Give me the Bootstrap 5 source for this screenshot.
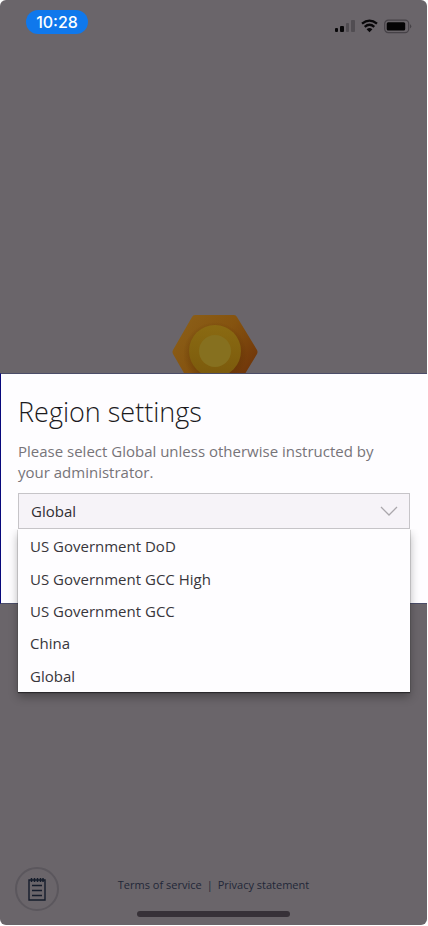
<!DOCTYPE html>
<html lang="en">
<head>
<meta charset="utf-8">
<meta name="viewport" content="width=device-width, initial-scale=1">
<title>Region settings</title>
<link href="https://cdn.jsdelivr.net/npm/bootstrap@5.3.0/dist/css/bootstrap.min.css" rel="stylesheet">
<style>
body{background:#fff;font-family:"Open Sans","Noto Sans",sans-serif;color:#302e33}
.screen{min-height:calc(100vh - 1px);margin-right:1px;background:#6a656a;border-radius:6px}
.status{padding:10px 15px 0 26px;height:44px}
.clock{background:#0f78ec;color:#fff;border-radius:12px;width:62px;height:24px;font:500 16px/24px Inter,sans-serif}
.signals{gap:6px;padding-top:4px}
.hero{padding-top:271px}
.hero svg{margin-bottom:-16px}
.region{background:#fefdff;border:1px solid #4b4d68;border-left:1px solid #08087c;border-right:0;padding:20px 17px 74px 17px}
.region h1{font-size:27px;line-height:36px;font-weight:300;color:#1b1a1d;margin-bottom:11px}
.region label{font-size:15px;line-height:21px;color:#777479;margin-bottom:10px;padding-right:20px}
.region .form-select{height:36px;border:1px solid #c6c4c8;border-radius:0;background-color:#f6f3f8;color:#302e33;font-size:15px;line-height:24px;padding:5px 36px 5px 12px;background-image:url("data:image/svg+xml,%3Csvg xmlns='http://www.w3.org/2000/svg' viewBox='0 0 18 10'%3E%3Cpath d='M1 1l8 8 8-8' fill='none' stroke='%23aaa7ac' stroke-width='1.3'/%3E%3C/svg%3E");background-size:18px 10px;background-position:right 11px center}
.region .choices{top:100%;min-height:163px;padding:1px 0 0;background:#fefdff;box-shadow:0 1px 1px #2b292c,0 5px 9px rgba(0,0,0,.3);clip-path:inset(0 -16px -20px -16px)}
.choices button{font-size:15px;line-height:20px;color:#38363b;padding:0 12px}
.bottom{padding:0 15px}
.note{width:44px;height:44px;border:2px solid #5b575d}
.terms{font-size:11px;line-height:16px;color:#222738;gap:5px;padding-bottom:8px}
.terms a{color:#222738}
.homebar{width:153px;height:6px;background:#373138}
</style>
<script src="https://cdn.jsdelivr.net/npm/bootstrap@5.3.0/dist/js/bootstrap.bundle.min.js"></script>
</head>
<body>
<div class="screen d-flex flex-column">
  <header class="status d-flex justify-content-between align-items-start">
    <time class="clock text-center">10:28</time>
    <div class="signals d-flex align-items-center">
      <svg width="20" height="24" viewBox="0 0 20 24" aria-label="Signal"><g fill="#080709"><rect x="0" y="14" width="3" height="4" rx="1"/><rect x="5" y="12" width="4" height="6" rx="1"/></g><g fill="#514d52"><rect x="11" y="9" width="3" height="9" rx="1"/><rect x="16" y="6" width="4" height="12" rx="1"/></g></svg>
      <svg width="17" height="24" viewBox="0 0 17 24" aria-label="Wi-Fi"><g fill="none" stroke="#080709" stroke-width="2.3"><path d="M1 9.7Q8.5 3.5 16 9.7M3.7 12.8Q8.5 8.8 13.3 12.8"/></g><path d="M5.6 15.2Q8.5 13 11.4 15.2L8.5 18.2Z" fill="#080709"/></svg>
      <svg width="28" height="24" viewBox="0 0 28 24" aria-label="Battery"><rect x=".7" y="6.2" width="24" height="12.4" rx="3.6" fill="none" stroke="#464247" stroke-width="1.2"/><rect x="2.7" y="8.2" width="18.5" height="8.4" rx="1.5" fill="#050405"/><path d="M26 10q2.6 2.3 0 4.6z" fill="#464247"/></svg>
    </div>
  </header>

  <div class="hero text-center">
    <svg class="d-block mx-auto" width="88" height="74" viewBox="-2 0 88 74" aria-label="Logo">
      <defs>
        <linearGradient id="amber" x1="0" y1="0" x2="1" y2=".8"><stop offset="0" stop-color="#8c6119"/><stop offset=".5" stop-color="#85530f"/><stop offset="1" stop-color="#6c3008"/></linearGradient>
        <radialGradient id="shade"><stop offset=".7" stop-color="#532900" stop-opacity=".35"/><stop offset="1" stop-color="#532900" stop-opacity="0"/></radialGradient>
        <linearGradient id="gold" x1="0" y1="0" x2="0" y2="1"><stop offset="0" stop-color="#8a6a12"/><stop offset="1" stop-color="#7b5a0c"/></linearGradient>
      </defs>
      <path d="M23 0H62Q64 0 65 2L85 35Q86 37 85 39L65 72Q64 74 62 74H23Q21 74 20 72L1 39Q0 37 1 35L20 2Q21 0 23 0Z" fill="url(#amber)"/>
      <circle cx="43" cy="39" r="32" fill="url(#shade)"/>
      <circle cx="43" cy="36" r="26" fill="url(#gold)"/>
      <circle cx="43" cy="36" r="16" fill="#86701f"/>
    </svg>
  </div>

  <main class="region position-relative">
    <h1>Region settings</h1>
    <label class="d-block" for="region">Please select Global unless otherwise instructed by your administrator.</label>
    <div class="position-relative">
      <select class="form-select" id="region"><option>US Government DoD</option><option>US Government GCC High</option><option>US Government GCC</option><option>China</option><option selected>Global</option></select>
      <div class="choices position-absolute start-0 w-100 d-flex flex-column" role="group" aria-label="Regions">
        <button type="button" class="btn rounded-0 border-0 text-start flex-fill">US Government DoD</button>
        <button type="button" class="btn rounded-0 border-0 text-start flex-fill">US Government GCC High</button>
        <button type="button" class="btn rounded-0 border-0 text-start flex-fill">US Government GCC</button>
        <button type="button" class="btn rounded-0 border-0 text-start flex-fill">China</button>
        <button type="button" class="btn rounded-0 border-0 text-start flex-fill">Global</button>
      </div>
    </div>
  </main>

  <footer class="bottom mt-auto row g-0 align-items-center">
    <div class="col">
      <button type="button" class="note btn rounded-circle p-0 d-flex align-items-center justify-content-center" aria-label="Notes">
        <svg width="18" height="24" viewBox="0 0 18 24" fill="none" stroke="#151c2b"><path d="M1 3H17V23H1Z" stroke-width="1.4"/><path d="M3.5 1V5M6.500 1V5M9.500 1V5M12.500 1V5M15 1V5" stroke-width="1.5"/><path d="M4 8.500H14M4 13.500H14M4 18.500H14" stroke-width="1.3"/></svg>
      </button>
    </div>
    <nav class="terms col-auto d-flex" aria-label="Legal">
      <a class="text-decoration-none" href="#terms">Terms of service</a><span>|</span><a class="text-decoration-none" href="#privacy">Privacy statement</a>
    </nav>
    <div class="col"></div>
  </footer>
  <div class="homebar rounded-pill mx-auto mb-2"></div>
</div>
</body>
</html>
